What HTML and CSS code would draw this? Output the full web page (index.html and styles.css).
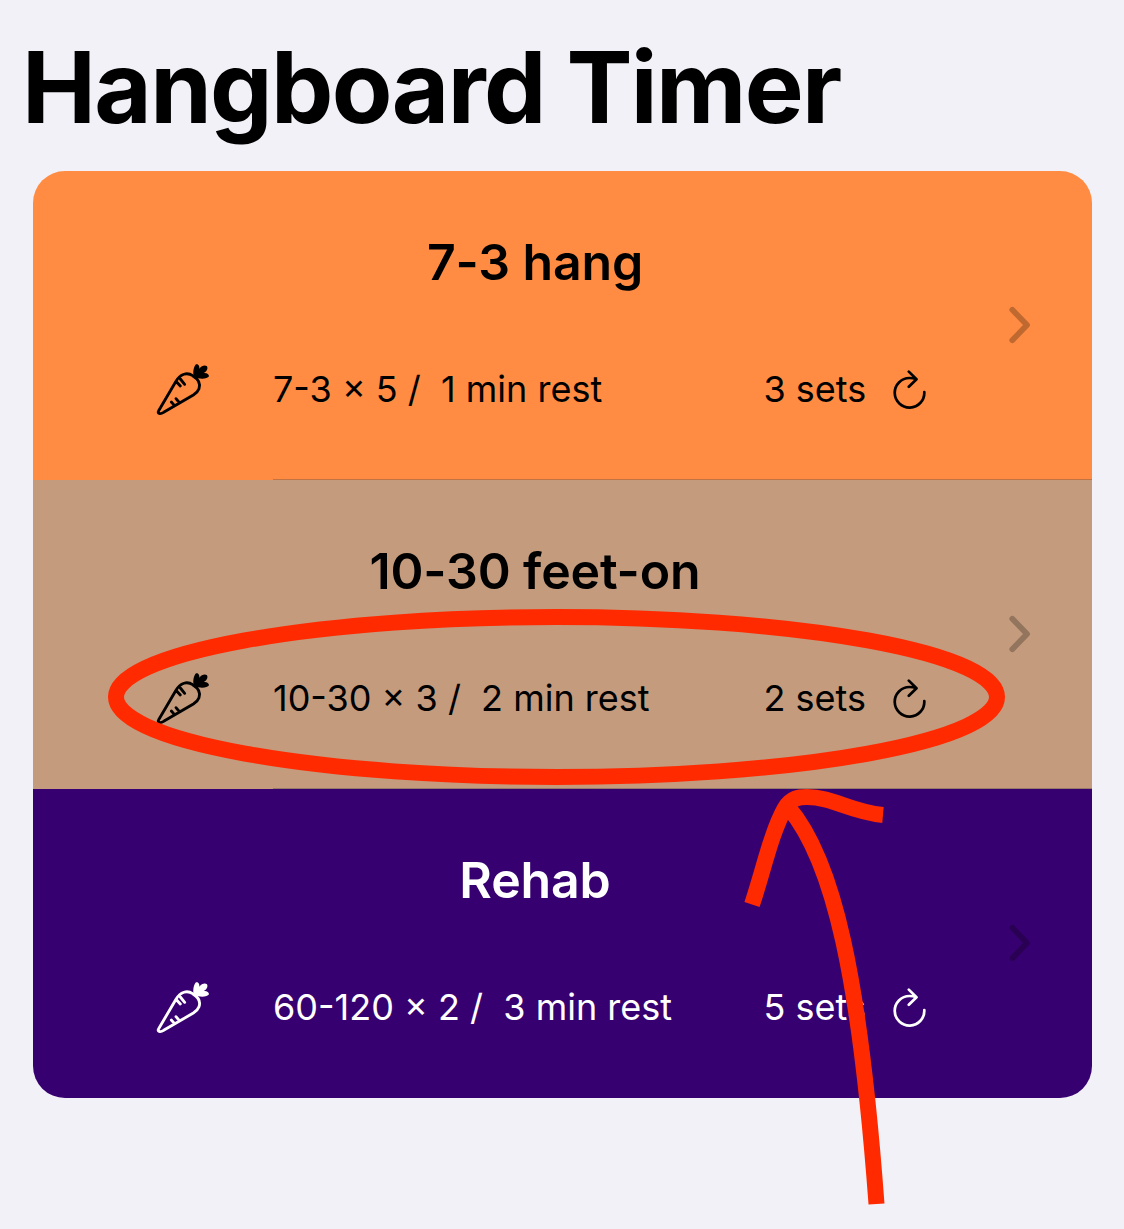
FILE: index.html
```html
<!DOCTYPE html>
<html lang="en">
<head>
<meta charset="utf-8">
<title>Hangboard Timer</title>
<link rel="stylesheet" href="styles.css">
</head>
<body>
<svg class="symbols" aria-hidden="true">
  <symbol id="carrot" viewBox="45 36 168 168">
    <path d="M56 182 L108 94 C121 71 142 66 158 77 C176 88 182 102 177 116 C174 124 168 130 160 135 L71 187 C60 194 51 190 56 182 Z M110 96 L121 108 M121 87 L134 103 M94 156 L103 166 M108 146 L119 159" fill="none" stroke="currentColor" stroke-width="8.5" stroke-linecap="round" stroke-linejoin="round"/>
    <path d="M161 80 C158 66 161 50 168 43 C176 41 179 50 178 56 C185 47 195 44 201 49 C205 57 199 65 192 69 C200 68 207 72 207 79 C203 86 188 88 174 85 L166 88 Z" fill="currentColor"/>
  </symbol>
  <symbol id="repeat" viewBox="0 0 34 40">
    <path d="M31.3 22 A14.8 14.8 0 1 1 16.5 8 Q20 8 23.3 9.2 M15.8 1.6 L23.5 9.2 L15.8 16.8" fill="none" stroke="currentColor" stroke-width="2.7" stroke-linecap="round" stroke-linejoin="round"/>
  </symbol>
  <symbol id="chevron" viewBox="0 0 22 38">
    <path d="M3.3 3.8 L18 19 L3.3 34.2" fill="none" stroke="currentColor" stroke-width="5.8" stroke-linecap="round" stroke-linejoin="round"/>
  </symbol>
</svg>
<main class="page">
  <h1 class="title">Hangboard Timer</h1>
  <ul class="list">
    <li class="row row-orange">
      <div class="content">
        <h2 class="name">7-3 hang</h2>
        <div class="details">
          <svg class="carrot"><use href="#carrot"/></svg>
          <span class="plan">7-3 × 5 /&nbsp; 1 min rest</span>
          <span class="sets">3 sets</span>
          <svg class="repeat"><use href="#repeat"/></svg>
        </div>
      </div>
      <svg class="chevron"><use href="#chevron"/></svg>
    </li>
    <li class="row row-tan">
      <div class="content">
        <h2 class="name">10-30 feet-on</h2>
        <div class="details">
          <svg class="carrot"><use href="#carrot"/></svg>
          <span class="plan">10-30 × 3 /&nbsp; 2 min rest</span>
          <span class="sets">2 sets</span>
          <svg class="repeat"><use href="#repeat"/></svg>
        </div>
      </div>
      <svg class="chevron"><use href="#chevron"/></svg>
    </li>
    <li class="row row-purple">
      <div class="content">
        <h2 class="name">Rehab</h2>
        <div class="details">
          <svg class="carrot"><use href="#carrot"/></svg>
          <span class="plan">60-120 × 2 /&nbsp; 3 min rest</span>
          <span class="sets">5 sets</span>
          <svg class="repeat"><use href="#repeat"/></svg>
        </div>
      </div>
      <svg class="chevron"><use href="#chevron"/></svg>
    </li>
  </ul>
  <svg class="markup" viewBox="0 0 1124 1229" aria-hidden="true">
    <ellipse cx="556.5" cy="697" rx="440.5" ry="80"/>
    <path d="M752 904.5 C763 872 771 833 785 808 C791 798 799 797 807 797 C833 797 850 812 883 815"/>
    <path d="M788 807 C834 860 860 980 876.5 1204"/>
  </svg>
</main>
</body>
</html>
```
FILE: styles.css
```css
* { box-sizing: border-box; }

body {
  margin: 0;
  background: #f2f1f7;
  color: #000;
  font-family: Inter, "Liberation Sans", sans-serif;
}

.symbols { display: none; }

.page {
  position: relative;
  height: 1229px;
  padding: 27px 32px 0 33px;
  overflow: hidden;
}

.title {
  margin: 0 0 24px -11px;
  font-size: 99px;
  line-height: 120px;
  font-weight: 700;
  letter-spacing: -1.65px;
  white-space: nowrap;
}

.list {
  margin: 0;
  padding: 0;
  list-style: none;
  border-radius: 32px;
  overflow: hidden;
}

.row {
  display: flex;
  align-items: center;
  justify-content: space-between;
  height: 309px;
  padding: 0 61px 0 64px;
  background-repeat: no-repeat;
  background-position: 240px 100%;
  background-size: 100% 1px;
}

.row-orange {
  background-color: #ff8c42;
  background-image: linear-gradient(#c27342, #c27342);
}

.row-tan {
  background-color: #c49b7d;
  background-image: linear-gradient(#967a69, #967a69);
}

.row-purple {
  background-color: #370070;
  color: #fff;
}

.content {
  align-self: flex-start;
  width: 876px;
  padding-top: 59px;
}

.name {
  margin: 0 0 73px;
  font-size: 50px;
  line-height: 64px;
  font-weight: 600;
  text-align: center;
  letter-spacing: -0.15px;
}

.details {
  display: grid;
  grid-template-columns: 58px 56px 62px 490.5px 129.5px 34px;
  align-items: center;
  font-size: 36px;
  line-height: 44px;
  letter-spacing: 0;
  white-space: nowrap;
}

.carrot {
  grid-column: 2;
  width: 56px;
  height: 56px;
  margin: -5px 0 -7px;
}

.plan { grid-column: 4; }
.sets { grid-column: 5; }

.repeat {
  grid-column: 6;
  width: 34px;
  height: 40px;
  margin: 1px 0 -1px;
}

.chevron {
  width: 22px;
  height: 38px;
  margin-bottom: 2px;
  color: rgba(0, 0, 0, 0.25);
}

.markup {
  position: absolute;
  inset: 0;
  width: 1124px;
  height: 1229px;
  fill: none;
  stroke: #ff2a00;
  stroke-width: 16px;
  pointer-events: none;
}
```
